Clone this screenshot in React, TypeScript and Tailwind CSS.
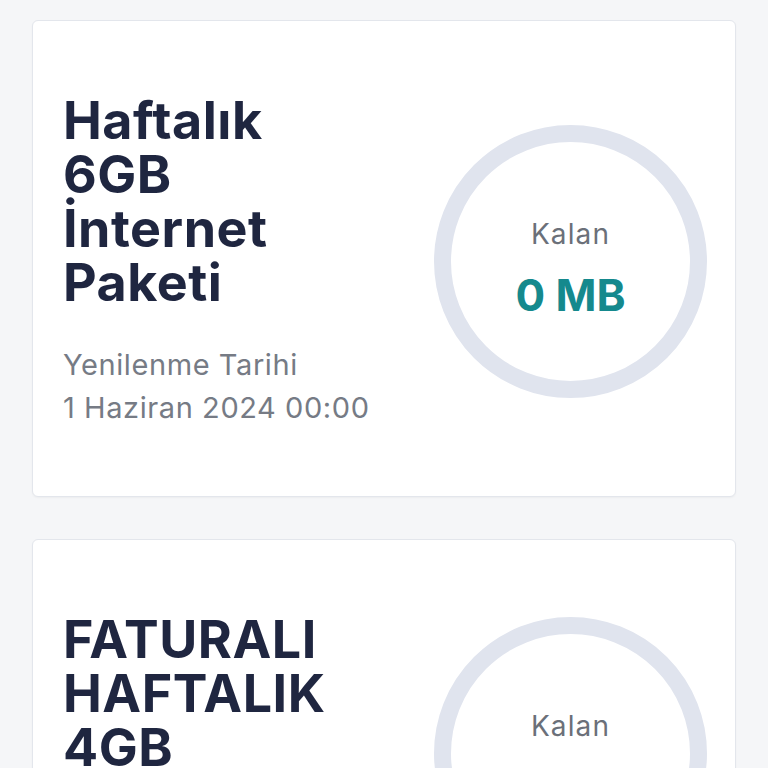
const packages = [
  {
    title: "Haftalık 6GB İnternet Paketi",
    renewLabel: "Yenilenme Tarihi",
    renewDate: "1 Haziran 2024 00:00",
    remaining: "0 MB",
  },
  {
    title: "FATURALI HAFTALIK 4GB",
    renewLabel: "Yenilenme Tarihi",
    renewDate: "1 Haziran 2024 00:00",
    remaining: "0 MB",
  },
];

function PackageCard({ pkg }: { pkg: (typeof packages)[number] }) {
  return (
    <div className="flex items-center justify-between rounded-md border border-[#e3e6ec] bg-white pl-[30px] pr-[28px] pt-[73px] pb-[67px] shadow-[0_1px_2px_rgba(0,0,0,0.04)]">
      <div className="flex flex-col">
        <h2 className="max-w-[300px] text-[52px] font-bold leading-[54px] tracking-[0.01em] text-[#1f2640]">
          {pkg.title}
        </h2>
        <div className="mt-[33px] whitespace-nowrap text-[29px] leading-[43px] tracking-[0.02em] text-[#767b85]">
          <div>{pkg.renewLabel}</div>
          <div>{pkg.renewDate}</div>
        </div>
      </div>
      <div className="flex h-[273px] w-[273px] shrink-0 flex-col items-center justify-center rounded-full border-[17px] border-[#e0e4ee] pt-[13px]">
        <div className="text-[28px] leading-[36px] tracking-[0.04em] text-[#6b7079]">
          Kalan
        </div>
        <div className="mt-[17px] text-[44px] font-bold leading-[52px] text-[#15898d]">
          {pkg.remaining}
        </div>
      </div>
    </div>
  );
}

export default function App() {
  return (
    <div className="min-h-screen bg-[#f5f6f8] px-8 pt-5 pb-10 font-['Inter','Noto_Sans',sans-serif]">
      <div className="flex flex-col gap-[42px]">
        {packages.map((p) => (
          <PackageCard key={p.title} pkg={p} />
        ))}
      </div>
    </div>
  );
}
